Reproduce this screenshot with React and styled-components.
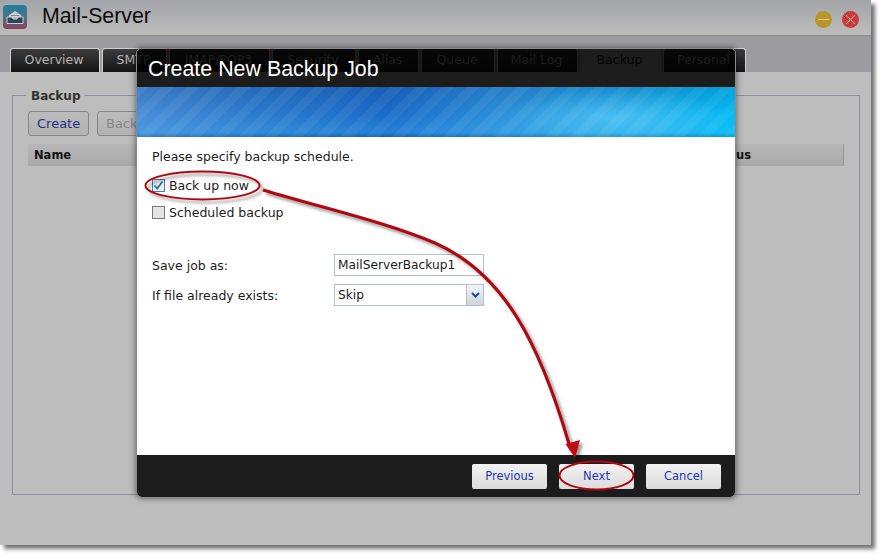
import React from 'react';
import styled, { createGlobalStyle } from 'styled-components';

const GlobalStyle = createGlobalStyle`
  html, body { margin: 0; padding: 0; background: #fff; }
  body { font-family: "DejaVu Sans", Verdana, sans-serif; font-size: 12px; }
  * { box-sizing: border-box; }
`;

const Page = styled.div`
  width: 886px;
  height: 560px;
  overflow: hidden;
`;

const Win = styled.div`
  position: relative;
  width: 871px;
  height: 545px;
  background: #bdbdbd;
  box-shadow: 4px 4px 4px rgba(0, 0, 0, 0.55);
`;

const TitleBar = styled.header`
  height: 36px;
  display: flex;
  align-items: center;
  padding: 0 12px 2px 3px;
  background: linear-gradient(#a3a4a8, #bdbdbd);
  border-bottom: 1px solid #8f8f8f;
`;

const AppName = styled.h1`
  margin: 0 0 0 15px;
  font: normal 21.3px "Liberation Sans", Arial, sans-serif;
  color: #0c0c0c;
  flex: 1;
`;

const Circle = styled.span`
  width: 17px;
  height: 17px;
  margin: 5px 0 0 10px;
  border-radius: 50%;
  background: ${(p) => p.$color};
  display: flex;
  align-items: center;
  justify-content: center;
`;

const TabStrip = styled.nav`
  height: 36px;
  display: flex;
  align-items: flex-end;
  gap: 2px;
  padding-left: 10px;
  background: #9b9ba0;
`;

const Tab = styled.div`
  width: ${(p) => p.$w}px;
  height: 24px;
  display: flex;
  align-items: center;
  justify-content: center;
  padding: 0 2px 2px 0;
  font-size: 12.5px;
  border-radius: 3px 3px 0 0;
  border: 1px solid ${(p) => (p.$active ? '#bdbdbd' : '#d0d0d0')};
  border-bottom: 0;
  color: ${(p) => (p.$active ? '#222' : '#b4b4b4')};
  background: ${(p) => (p.$active ? '#bdbdbd' : 'linear-gradient(#3c3c3c, #141414)')};
`;

const Content = styled.main`
  padding: 15px 12px 0;
`;

const Group = styled.fieldset`
  margin: 0;
  padding: 0 15px;
  height: 408px;
  border: 1px solid #8e8e9e;
`;

const GroupTitle = styled.legend`
  margin-left: -2px;
  padding: 2px 5px 0;
  font-weight: bold;
  font-size: 12px;
  color: #33302c;
`;

const Toolbar = styled.div`
  display: flex;
  gap: 8px;
  margin-top: 8px;
`;

const ToolButton = styled.div`
  width: ${(p) => p.$w}px;
  height: 25px;
  display: flex;
  align-items: center;
  padding-left: 8px;
  font-size: 13px;
  color: ${(p) => (p.$off ? '#888' : '#1e3184')};
  background: linear-gradient(#bcbcbc, #b2b2b2);
  border: 1px solid #878787;
  border-radius: 3px;
`;

const TableHead = styled.div`
  height: 22px;
  margin-top: 8px;
  width: 816px;
  display: flex;
  align-items: center;
  justify-content: space-between;
  padding: 0 92px 0 6px;
  font-weight: bold;
  font-size: 11.5px;
  color: #111;
  background: linear-gradient(#b7b7b7, #a9a9a9);
  border-right: 1px solid #969696;
`;

const Modal = styled.section`
  position: absolute;
  left: 137px;
  top: 49px;
  width: 598px;
  height: 448px;
  display: flex;
  flex-direction: column;
  border-radius: 4px 4px 5px 5px;
  overflow: hidden;
  outline: 1px solid #8a8a8a;
  box-shadow: 0 0 6px 1px rgba(0, 0, 0, 0.55);
`;

const ModalTitle = styled.h2`
  margin: 0;
  height: 38px;
  padding: 8px 0 0 11px;
  font: normal 21.4px "Liberation Sans", Arial, sans-serif;
  color: #fff;
  background: rgba(0, 0, 0, 0.85);
`;

const Banner = styled.div`
  height: 50px;
  background:
    repeating-linear-gradient(-45deg, rgba(255, 255, 255, 0.05) 0 9px, rgba(255, 255, 255, 0) 9px 18px),
    radial-gradient(ellipse 110px 30px at 80% 62%, rgba(120, 215, 255, 0.5), rgba(120, 215, 255, 0)),
    linear-gradient(rgba(0, 40, 110, 0.2), rgba(0, 40, 110, 0) 55%, rgba(70, 200, 255, 0.22) 90%, rgba(0, 70, 130, 0.25)),
    linear-gradient(90deg, #4a8dd8 0%, #2a7acc 22%, #1c6cc8 42%, #2f93dc 62%, #1aa6e4 82%, #04bcf6 100%);
`;

const Body = styled.div`
  flex: 1;
  background: #fff;
  padding: 12px 15px 0;
  font-size: 12.5px;
  color: #1c1c1c;
`;

const Prompt = styled.p`
  margin: 0 0 13px;
  line-height: 16px;
`;

const CheckRow = styled.label`
  display: flex;
  align-items: center;
  gap: 4px;
  height: 14px;
  margin-bottom: 13px;
`;

const Box = styled.span`
  width: 13px;
  height: 13px;
  display: flex;
  align-items: center;
  justify-content: center;
  border: 1px solid ${(p) => (p.$on ? '#4b7fb6' : '#7a7a7a')};
  background: ${(p) => (p.$on ? '#e6eef6' : '#e4e4e4')};
`;

const Form = styled.div`
  display: grid;
  grid-template-columns: 182px 150px;
  grid-auto-rows: 22px;
  row-gap: 8px;
  align-items: center;
  margin-top: 35px;
`;

const Field = styled.div`
  height: 22px;
  display: flex;
  align-items: center;
  justify-content: space-between;
  padding-left: 3px;
  font-size: 12.2px;
  background: #fff;
  border: 1px solid #b3bfd2;
`;

const SelectButton = styled.span`
  width: 17px;
  height: 20px;
  display: flex;
  align-items: center;
  justify-content: center;
  border-left: 1px solid #b3bfd2;
  background: linear-gradient(#f2f4f7, #cfd4da);
`;

const Footer = styled.footer`
  height: 42px;
  display: flex;
  align-items: center;
  justify-content: flex-end;
  gap: 12px;
  padding: 0 14px 0 0;
  background: #1c1c1c;
`;

const FootButton = styled.div`
  width: 75px;
  height: 25px;
  display: flex;
  align-items: center;
  justify-content: center;
  font-size: 11.5px;
  color: #1f3aa8;
  background: linear-gradient(#f1f1f1, #dcdcdc);
  border-radius: 2px;
`;

const Marks = styled.svg`
  position: absolute;
  left: 0;
  top: 0;
  pointer-events: none;
`;

const tabs = [
  ['Overview', 90],
  ['SMTP', 65],
  ['IMAP/POP3', 101],
  ['Security', 84],
  ['Alias', 61],
  ['Queue', 74],
  ['Mail Log', 81],
  ['Backup', 81],
  ['Personal', 83],
];

function AppIcon() {
  return (
    <svg width="24" height="24" viewBox="0 0 24 24">
      <defs>
        <linearGradient id="iconBg" x1="0" y1="0" x2="0" y2="1">
          <stop offset="0" stopColor="#1f7f9c" />
          <stop offset="0.55" stopColor="#4e6f88" />
          <stop offset="1" stopColor="#8d3f58" />
        </linearGradient>
      </defs>
      <rect width="24" height="24" rx="4" fill="url(#iconBg)" />
      <path d="M6 10.5 L12 6.5 L18 10.5 L18 13 L6 13 Z" fill="#c9ccd0" stroke="#c4c8cc" strokeWidth="1" />
      <path d="M8 10.5 H16" stroke="#7c8c9c" strokeWidth="1" />
      <path d="M4 12 H9 L10 14 H14 L15 12 H20 V18.5 H4 Z" fill="#2f4257" stroke="#c9cdd0" strokeWidth="1" />
    </svg>
  );
}

function Annotations() {
  return (
    <Marks width="871" height="545" viewBox="0 0 871 545">
      <defs>
        <filter id="soft" x="-10%" y="-10%" width="120%" height="120%">
          <feGaussianBlur stdDeviation="1.6" />
        </filter>
      </defs>
      <g opacity="0.4" transform="translate(3 3)" filter="url(#soft)">
        <path d="M263 190 C330 210 385 222 435 243 C505 274 540 345 569 444" fill="none" stroke="#000" strokeWidth="3" />
        <ellipse cx="202.5" cy="185.5" rx="57" ry="14" fill="none" stroke="#000" strokeWidth="2" />
        <path d="M575 458 L566 444 L580 440 Z" fill="#000" />
      </g>
      <path d="M263 190 C330 210 385 222 435 243 C505 274 540 345 569 444" fill="none" stroke="#b0080e" strokeWidth="3.2" />
      <path d="M575 458 L565.5 444 L580 440 Z" fill="#c00a10" />
      <ellipse cx="202.5" cy="185.5" rx="57" ry="14" fill="none" stroke="#b0080e" strokeWidth="2" />
      <ellipse cx="596.5" cy="475.5" rx="37" ry="14" fill="none" stroke="#b0080e" strokeWidth="2" />
    </Marks>
  );
}

export default function App() {
  return (
    <Page>
      <GlobalStyle />
      <Win>
        <TitleBar>
          <AppIcon />
          <AppName>Mail-Server</AppName>
          <Circle $color="#b8962a">
            <svg width="11" height="3"><path d="M0 1.5 H11" stroke="#d8c88a" strokeWidth="1" /></svg>
          </Circle>
          <Circle $color="#c93a3a">
            <svg width="11" height="11"><path d="M1 1 L10 10 M10 1 L1 10" stroke="#e8c0c0" strokeWidth="1" /></svg>
          </Circle>
        </TitleBar>
        <TabStrip>
          {tabs.map(([name, w]) => (
            <Tab key={name} $w={w} $active={name === 'Backup'}>{name}</Tab>
          ))}
        </TabStrip>
        <Content>
          <Group>
            <GroupTitle>Backup</GroupTitle>
            <Toolbar>
              <ToolButton $w={61}>Create</ToolButton>
              <ToolButton $w={90} $off>Backup</ToolButton>
            </Toolbar>
            <TableHead>
              <span>Name</span>
              <span>Status</span>
            </TableHead>
          </Group>
        </Content>
        <Modal>
          <ModalTitle>Create New Backup Job</ModalTitle>
          <Banner />
          <Body>
            <Prompt>Please specify backup schedule.</Prompt>
            <CheckRow>
              <Box $on>
                <svg width="11" height="11" viewBox="0 0 11 11">
                  <path d="M1.5 5.5 L4.2 8.5 L9.5 1.5" fill="none" stroke="#2f6ea8" strokeWidth="1.8" />
                </svg>
              </Box>
              Back up now
            </CheckRow>
            <CheckRow>
              <Box />
              Scheduled backup
            </CheckRow>
            <Form>
              <span>Save job as:</span>
              <Field>MailServerBackup1</Field>
              <span>If file already exists:</span>
              <Field>
                Skip
                <SelectButton>
                  <svg width="9" height="6" viewBox="0 0 9 6">
                    <path d="M1 1 L4.5 4.5 L8 1" fill="none" stroke="#1747a8" strokeWidth="2" />
                  </svg>
                </SelectButton>
              </Field>
            </Form>
          </Body>
          <Footer>
            <FootButton>Previous</FootButton>
            <FootButton>Next</FootButton>
            <FootButton>Cancel</FootButton>
          </Footer>
        </Modal>
        <Annotations />
      </Win>
    </Page>
  );
}
